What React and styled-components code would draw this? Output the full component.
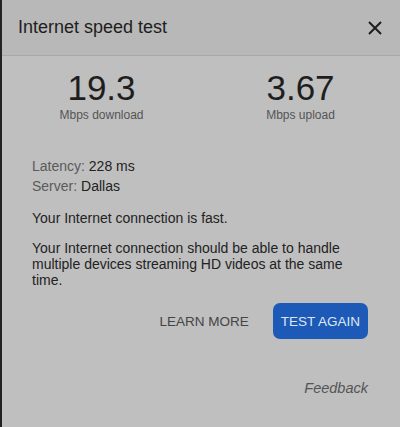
import React from 'react';
import styled, { createGlobalStyle } from 'styled-components';

const GlobalStyle = createGlobalStyle`
  html, body {
    margin: 0;
    padding: 0;
    background: #bfbfbf;
  }
  body {
    font-family: "Liberation Sans", Arial, sans-serif;
  }
`;

const Frame = styled.div`
  display: flex;
  width: 400px;
  height: 427px;
  border-left: 2px solid #222;
  box-sizing: border-box;
  background: #bfbfbf;
`;

const Dialog = styled.div`
  flex: 1;
  display: flex;
  flex-direction: column;
`;

const Header = styled.div`
  height: 55px;
  display: flex;
  align-items: center;
  justify-content: space-between;
  padding: 0 16px 0 16px;
  background: #b8b8b8;
  border-bottom: 1px solid #a9a9a9;
`;

const Title = styled.h1`
  margin: 0;
  font-size: 18px;
  font-weight: normal;
  color: #1e1e1e;
`;

const CloseButton = styled.button`
  border: 0;
  background: none;
  padding: 0;
  width: 18px;
  height: 18px;
  display: flex;
  align-items: center;
  justify-content: center;
  cursor: pointer;
`;

const Body = styled.div`
  padding: 12px 32px 0 30px;
  display: flex;
  flex-direction: column;
`;

const Stats = styled.div`
  display: grid;
  grid-template-columns: 1fr 1fr;
  margin: 0 -32px 0 -30px;
`;

const Stat = styled.div`
  display: flex;
  flex-direction: column;
  align-items: center;
`;

const Value = styled.div`
  font-size: 35px;
  line-height: 40px;
  color: #1e1e1e;
`;

const Unit = styled.div`
  font-size: 12px;
  line-height: 14px;
  color: #555;
`;

const Details = styled.div`
  margin-top: 34px;
  font-size: 14px;
  line-height: 20px;
  color: #222;
`;

const Label = styled.span`
  color: #5a5a5a;
`;

const Paragraph = styled.p`
  margin: 14px 0 0 0;
  font-size: 14px;
  line-height: 16px;
  color: #222;
`;

const Actions = styled.div`
  display: flex;
  justify-content: flex-end;
  gap: 16px;
  margin-top: 15px;
`;

const ActionButton = styled.button`
  height: 36px;
  padding: 0 8px;
  border: 0;
  border-radius: 7px;
  font-family: inherit;
  font-size: 13.5px;
  text-transform: uppercase;
  background: ${p => (p.primary ? '#1d5ab8' : 'transparent')};
  color: ${p => (p.primary ? '#dfe6f2' : '#444')};
  cursor: pointer;
`;

const Footer = styled.div`
  display: flex;
  justify-content: flex-end;
  margin-top: 41px;
`;

const FeedbackLink = styled.a`
  font-size: 14.5px;
  line-height: 16px;
  font-style: italic;
  color: #555;
`;

export default function App() {
  return (
    <>
      <GlobalStyle />
      <Frame>
        <Dialog>
          <Header>
            <Title>Internet speed test</Title>
            <CloseButton aria-label="Close">
              <svg width="14" height="14" viewBox="0 0 14 14">
                <path d="M1 1L13 13M13 1L1 13" stroke="#1e1e1e" strokeWidth="2" />
              </svg>
            </CloseButton>
          </Header>
          <Body>
            <Stats>
              <Stat>
                <Value>19.3</Value>
                <Unit>Mbps download</Unit>
              </Stat>
              <Stat>
                <Value>3.67</Value>
                <Unit>Mbps upload</Unit>
              </Stat>
            </Stats>
            <Details>
              <div><Label>Latency:</Label> 228 ms</div>
              <div><Label>Server:</Label> Dallas</div>
            </Details>
            <Paragraph>Your Internet connection is fast.</Paragraph>
            <Paragraph>
              Your Internet connection should be able to handle multiple devices
              streaming HD videos at the same time.
            </Paragraph>
            <Actions>
              <ActionButton>Learn more</ActionButton>
              <ActionButton primary>Test again</ActionButton>
            </Actions>
            <Footer>
              <FeedbackLink>Feedback</FeedbackLink>
            </Footer>
          </Body>
        </Dialog>
      </Frame>
    </>
  );
}
